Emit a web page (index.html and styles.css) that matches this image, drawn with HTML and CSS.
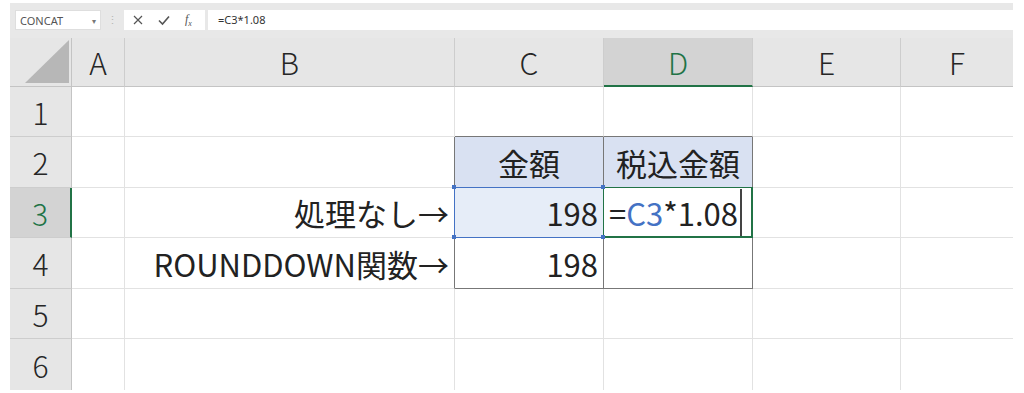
FILE: index.html
```html
<!DOCTYPE html>
<html lang="ja">
<head>
    <meta charset="UTF-8">
    <title>ROUNDDOWN関数</title>
    <link rel="stylesheet" href="styles.css">
</head>
<body>
    <div class="app">
        <!-- 数式バー -->
        <div class="formula-bar">
            <div class="name-box">
                <span>CONCAT</span>
                <span class="caret">&#9662;</span>
            </div>
            <div class="grip">&#8942;</div>
            <div class="tools">
                <svg class="icon" width="12" height="12" viewBox="0 0 12 12">
                    <path d="M2 2 L10 10 M10 2 L2 10" stroke="#555" stroke-width="1.2" fill="none"/>
                </svg>
                <svg class="icon" width="14" height="12" viewBox="0 0 14 12">
                    <path d="M2 6.5 L5.5 10 L12 2.5" stroke="#555" stroke-width="1.6" fill="none"/>
                </svg>
                <span class="fx">f<sub>x</sub></span>
            </div>
            <div class="formula-input">=C3*1.08</div>
        </div>

        <!-- シート -->
        <div class="sheet">
            <div class="cell corner">
                <svg width="44" height="43" viewBox="0 0 44 43">
                    <polygon points="0,43 44,0 44,43" fill="#b7b7b7"/>
                </svg>
            </div>
            <div class="cell col-head">A</div>
            <div class="cell col-head">B</div>
            <div class="cell col-head">C</div>
            <div class="cell col-head selected">D</div>
            <div class="cell col-head">E</div>
            <div class="cell col-head last">F</div>

            <div class="cell row-head">1</div>
            <div class="cell"></div>
            <div class="cell"></div>
            <div class="cell above-table"></div>
            <div class="cell above-table"></div>
            <div class="cell"></div>
            <div class="cell last"></div>

            <div class="cell row-head">2</div>
            <div class="cell"></div>
            <div class="cell left-of-table"></div>
            <div class="cell table head-fill center">金額</div>
            <div class="cell table head-fill center">税込金額</div>
            <div class="cell"></div>
            <div class="cell last"></div>

            <div class="cell row-head selected">3</div>
            <div class="cell"></div>
            <div class="cell left-of-table right">処理なし→</div>
            <div class="cell table ref right">
                198
                <span class="handle tl"></span>
                <span class="handle tr"></span>
                <span class="handle bl"></span>
                <span class="handle br"></span>
            </div>
            <div class="cell table active">=<span class="ref-text">C3</span>*1.08<span class="cursor"></span></div>
            <div class="cell"></div>
            <div class="cell last"></div>

            <div class="cell row-head">4</div>
            <div class="cell"></div>
            <div class="cell left-of-table right">ROUNDDOWN関数→</div>
            <div class="cell table right">198</div>
            <div class="cell table"></div>
            <div class="cell"></div>
            <div class="cell last"></div>

            <div class="cell row-head">5</div>
            <div class="cell"></div>
            <div class="cell"></div>
            <div class="cell"></div>
            <div class="cell"></div>
            <div class="cell"></div>
            <div class="cell last"></div>

            <div class="cell row-head bottom">6</div>
            <div class="cell bottom"></div>
            <div class="cell bottom"></div>
            <div class="cell bottom"></div>
            <div class="cell bottom"></div>
            <div class="cell bottom"></div>
            <div class="cell bottom last"></div>
        </div>
    </div>
</body>
</html>
```

FILE: styles.css
```css
body {
    margin: 0;
    background: #fff;
    font-family: "Noto Sans CJK JP", "Noto Sans", sans-serif;
}

.app {
    width: 1003px;
    margin: 3px 0 0 10px;
}

/* 数式バー */
.formula-bar {
    display: flex;
    align-items: flex-start;
    height: 35px;
    padding: 7px 0 0 5px;
    box-sizing: border-box;
    background: #e8e8e8;
    font-family: "Noto Sans", sans-serif;
    font-size: 11px;
    color: #555;
}

.name-box {
    display: flex;
    justify-content: space-between;
    align-items: center;
    width: 86px;
    height: 20px;
    padding: 0 4px;
    box-sizing: border-box;
    background: #fff;
    border: 1px solid #dedede;
}

.caret {
    font-size: 8px;
    color: #777;
}

.grip {
    width: 23px;
    height: 20px;
    line-height: 20px;
    text-align: center;
    color: #b5b5b5;
}

.tools {
    display: flex;
    align-items: center;
    gap: 13px;
    width: 81px;
    height: 20px;
    padding-left: 8px;
    box-sizing: border-box;
    background: #fff;
}

.fx {
    font-family: "Liberation Serif", serif;
    font-style: italic;
    font-size: 12px;
    color: #555;
    margin-left: 1px;
}

.fx sub {
    font-size: 8px;
}

.formula-input {
    flex: 1;
    height: 20px;
    line-height: 20px;
    margin-left: 3px;
    padding-left: 10px;
    background: #fff;
    color: #333;
}

/* シート */
.sheet {
    display: grid;
    grid-template-columns: 62px 53px 330px 149px 149px 148px 112px;
    grid-template-rows: 49px 50px 51px 50px 51px 50px 51px;
}

.cell {
    position: relative;
    display: flex;
    align-items: center;
    padding: 0 5px;
    box-sizing: border-box;
    border-right: 1px solid #e2e2e2;
    border-bottom: 1px solid #e2e2e2;
    font-size: 31px;
    line-height: 1;
    color: #222;
    white-space: nowrap;
}

.cell.last {
    border-right: none;
}

.cell.bottom {
    border-bottom: none;
}

.col-head,
.row-head {
    justify-content: center;
    background: #e6e6e6;
    border-color: #cdcdcd;
    color: #262626;
    font-size: 30px;
    font-weight: 300;
}

.row-head {
    border-right-color: #c4c4c4;
}

.col-head {
    border-bottom-color: #c4c4c4;
}

.col-head.selected {
    background: #d3d3d3;
    border-bottom: 2px solid #217346;
    color: #217346;
}

.row-head.selected {
    background: #d3d3d3;
    border-right: 2px solid #217346;
    color: #217346;
}

.corner {
    align-items: flex-end;
    justify-content: flex-end;
    padding: 0 2px 3px 0;
    background: #e6e6e6;
    border-color: #c4c4c4;
}

.center {
    justify-content: center;
}

.right {
    justify-content: flex-end;
}

/* 表 */
.table {
    border-right-color: #777;
    border-bottom-color: #777;
}

.above-table {
    border-bottom-color: #777;
}

.left-of-table {
    border-right-color: #777;
}

.head-fill {
    background: #d9e1f2;
}

.ref {
    background: #e6edf8;
}

.ref::after {
    content: "";
    position: absolute;
    top: -1px;
    left: -1px;
    right: -1px;
    bottom: -1px;
    border: 1px solid #4472c4;
}

.handle {
    position: absolute;
    width: 4px;
    height: 4px;
    background: #4472c4;
    z-index: 2;
}

.handle.tl { top: -3px; left: -3px; }
.handle.tr { top: -3px; right: -2px; }
.handle.bl { bottom: -2px; left: -3px; }
.handle.br { bottom: -2px; right: -2px; }

.active::after {
    content: "";
    position: absolute;
    top: -1px;
    left: -1px;
    right: -1px;
    bottom: -1px;
    border: 2px solid #217346;
    border-left-width: 1px;
    border-top-width: 1px;
}

.ref-text {
    color: #4472c4;
}

.cursor {
    display: inline-block;
    width: 2px;
    height: 48px;
    margin-left: 2px;
    background: #444;
}
```
